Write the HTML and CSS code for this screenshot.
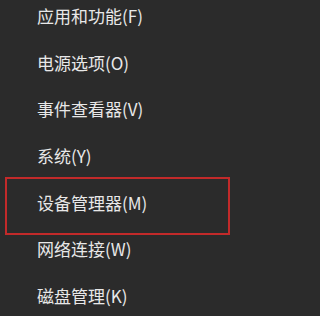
FILE: index.html
```html
<!DOCTYPE html>
<html lang="zh-CN">
<head>
<meta charset="utf-8">
<link rel="stylesheet" href="styles.css">
</head>
<body>
<ul class="menu">
  <li class="item">应用和功能(F)</li>
  <li class="item">电源选项(O)</li>
  <li class="item">事件查看器(V)</li>
  <li class="item">系统(Y)</li>
  <li class="item marked">设备管理器(M)<span class="highlight"></span></li>
  <li class="item">网络连接(W)</li>
  <li class="item">磁盘管理(K)</li>
</ul>
</body>
</html>
```
FILE: styles.css
```css
html, body {
  margin: 0;
  padding: 0;
  background: #2b2b2b;
  overflow: hidden;
}
body {
  width: 287px;
  height: 316px;
  font-family: "Noto Sans CJK SC", "Noto Sans", sans-serif;
  color: #e8e8e8;
}
.menu {
  list-style: none;
  margin: -7px 0 0 0;
  padding: 0;
}
.item {
  height: 46.67px;
  line-height: 46.67px;
  padding-left: 37px;
  font-size: 17px;
  white-space: nowrap;
}
.marked {
  position: relative;
}
.highlight {
  position: absolute;
  left: 5px;
  top: -3px;
  width: 221px;
  height: 54px;
  border: 2px solid #c22a2a;
}
```
